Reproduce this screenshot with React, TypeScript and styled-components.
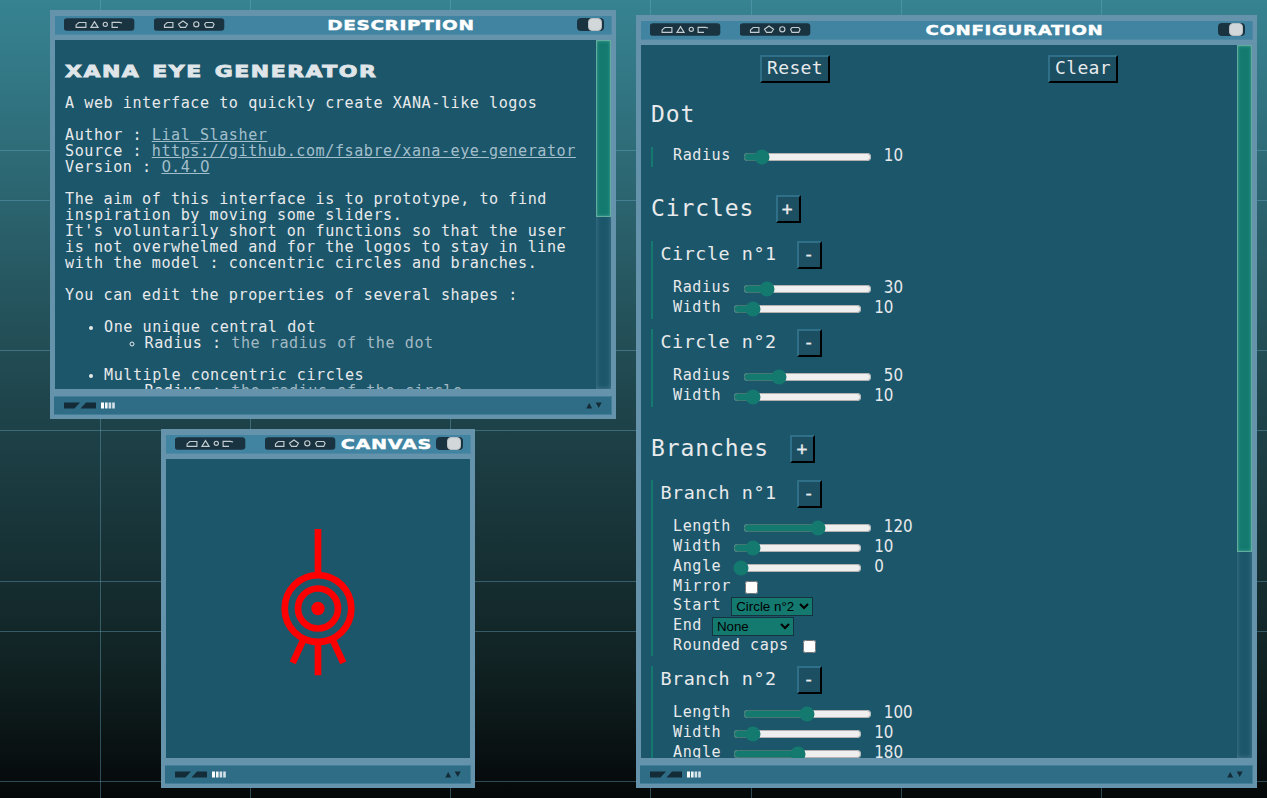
import React from "react";
import styled, { createGlobalStyle } from "styled-components";

const MONO = '"DejaVu Sans Mono", "Liberation Mono", monospace';

const GlobalStyle = createGlobalStyle`
  *, *::before { box-sizing: border-box; }
  html, body { margin: 0; height: 100%; overflow: hidden; }
  #root { height: 100%; }
`;

const Desktop = styled.div`
  position: relative;
  width: 1267px;
  height: 798px;
  overflow: hidden;
  color: #e8eaec;
  font-family: ${MONO};
  background: linear-gradient(#378392 0, #1f454c 400px, #112324 660px, #050809 798px);
`;

const Grid = styled.svg`
  display: block;
  width: 100%;
  height: 100%;
`;

const Frame = styled.section<{ $x: number; $y: number; $w: number; $h: number }>`
  position: absolute;
  left: ${(p) => p.$x}px;
  top: ${(p) => p.$y}px;
  width: ${(p) => p.$w}px;
  height: ${(p) => p.$h}px;
  display: flex;
  flex-direction: column;
  padding: 6px 5px 4px;
  background: #6493ab;
`;

const TitleBar = styled.header`
  display: flex;
  flex: none;
  height: 19px;
  margin: 0 -1px 5px 0;
  padding: 2px 7px 0 9px;
  background: #4084a2;
  border-right: 1px solid #5089a6;
  border-bottom: 1px solid #5089a6;
`;

const Pill = styled.svg`
  flex: none;
  display: block;
  width: 71px;
  height: 13px;
  margin-right: 18.5px;
  & + & { margin-right: 0; }
`;

const TitleSlot = styled.div`
  flex: 1;
  min-width: 0;
  display: flex;
  justify-content: center;
`;

const WideText = styled.span<{ $size: number; $scale: number }>`
  display: block;
  white-space: pre;
  font: bold ${(p) => p.$size}px/14px "DejaVu Sans", sans-serif;
  transform: scaleX(${(p) => p.$scale});
  -webkit-text-stroke: 0.4px currentColor;
`;

const Caption = styled(WideText)`
  color: #fff;
  letter-spacing: 0.5px;
  margin-right: -0.5px;
`;

const Toggle = styled.div`
  flex: none;
  width: 27px;
  height: 13px;
  padding: 0 2px 0 11px;
  border-radius: 4px;
  background: #1a3340;
  &::before {
    content: "";
    display: block;
    height: 13px;
    border-radius: 4px;
    background: #d2d7da;
    border: 1px solid #b8c0c5;
  }
`;

const Body = styled.div`
  flex: 1;
  min-height: 0;
  display: flex;
  background: #1c566a;
`;

const Content = styled.div`
  flex: 1;
  min-width: 0;
  overflow: hidden;
  padding: 10px;
`;

const ScrollTrack = styled.div`
  flex: none;
  width: 15px;
  box-shadow: inset 0 0 5px #4b7c94;
`;

const ScrollThumb = styled.div<{ $h: number }>`
  height: ${(p) => p.$h}px;
  background: #147a70;
  border: 1px solid #63ad9f;
  box-shadow: inset 0 0 3px #4da597;
`;

const StatusBar = styled.footer`
  flex: none;
  display: flex;
  justify-content: space-between;
  height: 19px;
  margin: 7px -1px 0;
  padding: 4.5px 9px 0 10px;
  background: #2f6d87;
  border-top: 1px solid #417f9a;
  border-bottom: 1px solid #417f9a;
  border-right: 1px solid #417f9a;
  svg { display: block; }
`;

function GlyphPill({ second }: { second?: boolean }) {
  return (
    <Pill viewBox="0 0 71 13">
      <rect x="-0.3" y="0.2" width="70.6" height="12.5" rx="3.2" fill="#1a3340" />
      <g fill="none" stroke="#c3cdd1" strokeWidth="1.15" transform="translate(-0.5 0)">
        {second ? (
          <>
            <path d="M11 9.4V6.9L13.7 4.5H19.4V9.4Z" />
            <path d="M29.5 3L34 6.2L32 9.4H27L25 6.2Z" />
            <circle cx="42.8" cy="6.3" r="2.6" />
            <path d="M52.5 4.5H59.2L60.6 6.3L59.2 9.4H52.5L51.1 6.3Z" />
          </>
        ) : (
          <>
            <path d="M12.6 9.4V6.9L15.3 4.5H22.4V9.4Z" />
            <path d="M31 3.6L34.6 9.4H27.4Z" />
            <circle cx="41.8" cy="6.3" r="2.1" />
            <path d="M54.5 9.4H48.6V4.4H56L58.6 5" />
          </>
        )}
      </g>
    </Pill>
  );
}

interface WindowProps {
  title: string;
  scale: number;
  x: number;
  y: number;
  w: number;
  h: number;
  children: React.ReactNode;
}

function Window({ title, scale, x, y, w, h, children }: WindowProps) {
  return (
    <Frame $x={x} $y={y} $w={w} $h={h}>
      <TitleBar>
        <GlyphPill />
        <GlyphPill second />
        <TitleSlot>
          <Caption $size={14} $scale={scale}>{title}</Caption>
        </TitleSlot>
        <Toggle />
      </TitleBar>
      <Body>{children}</Body>
      <StatusBar>
        <svg width="52" height="8" viewBox="0 0 52 8">
          <path d="M0 0.5H16L10.5 6.5H0ZM22 0.5H32V6.5H16.5Z" fill="#142c38" />
          <path d="M37 0.5h3v6h-3z" fill="#fff" />
          <path d="M41 0.5h2.6v6h-2.6z" fill="#f0f5f7" />
          <path d="M44.6 0.5h2.6v6h-2.6z" fill="#d3e0e7" />
          <path d="M48.2 0.5h2.6v6h-2.6z" fill="#d3e0e7" />
        </svg>
        <svg width="16" height="8" viewBox="0 0 16 8">
          <path d="M3.2 1L6.2 6.5H0.2ZM9.7 0.5H15.7L12.7 6Z" fill="#142c38" />
        </svg>
      </StatusBar>
    </Frame>
  );
}

/* ---------- Description ---------- */

const Prose = styled.div`
  font-size: 15.1px;
  line-height: 16px;
  letter-spacing: 0.0365em;
  white-space: nowrap;
  p { margin: 0 0 16px; }
  ul { margin: 0 0 16px; padding-left: 39px; }
  ul ul { margin: 0; padding-left: 40.5px; }
  li > span { color: #a3b9c3; }
  li::marker { font-size: 12.5px; }
`;

const Heading = styled.h1`
  margin: 0;
  height: 45px;
  padding-top: 14.5px;
  color: #dfe5e8;
  ${WideText} {
    width: max-content;
    letter-spacing: 1.05px;
    word-spacing: 2px;
    transform-origin: left center;
    -webkit-text-stroke-width: 0.8px;
  }
`;

const Link = styled.a`
  color: #a3bfcc;
  text-decoration: underline;
`;

const PlainZero = styled.span`
  font-family: "DejaVu Sans", sans-serif;
  letter-spacing: 0;
`;

function Description() {
  return (
    <>
      <Content>
        <Prose>
          <Heading>
            <WideText $size={15} $scale={1.46}>XANA EYE GENERATOR</WideText>
          </Heading>
          <p>A web interface to quickly create XANA-like logos</p>
          <p>
            Author : <Link href="#">Lial_Slasher</Link>
            <br />
            Source : <Link href="#">https://github.com/fsabre/xana-eye-generator</Link>
            <br />
            Version : <Link href="#"><PlainZero>0</PlainZero>.4.<PlainZero>0</PlainZero></Link>
          </p>
          <p>
            The aim of this interface is to prototype, to find
            <br />
            inspiration by moving some sliders.
            <br />
            It's voluntarily short on functions so that the user
            <br />
            is not overwhelmed and for the logos to stay in line
            <br />
            with the model : concentric circles and branches.
          </p>
          <p>You can edit the properties of several shapes :</p>
          <ul>
            <li>
              One unique central dot
              <ul>
                <li>Radius : <span>the radius of the dot</span></li>
              </ul>
            </li>
          </ul>
          <ul>
            <li>
              Multiple concentric circles
              <ul>
                <li>Radius : <span>the radius of the circle</span></li>
              </ul>
            </li>
          </ul>
        </Prose>
      </Content>
      <ScrollTrack>
        <ScrollThumb $h={177} />
      </ScrollTrack>
    </>
  );
}

/* ---------- Configuration ---------- */

const Actions = styled.div`
  display: grid;
  grid-template-columns: 1fr 1fr;
  justify-items: center;
`;

const Button = styled.button<{ $w: number }>`
  width: ${(p) => p.$w}px;
  height: 28px;
  padding: 0 0 2px;
  border: 2px solid;
  border-color: #2f6f88 #000 #000 #2f6f88;
  background: #1b4f61;
  color: #e8eaec;
  font: 18.05px/22px ${MONO};
  letter-spacing: 0.02em;
`;

const SignButton = styled(Button)<{ $lift?: number }>`
  padding: 0 2px ${(p) => p.$lift ?? 1}px 0;
  font-size: 18px;
  letter-spacing: 0;
  -webkit-text-stroke: 0.3px currentColor;
`;

const SectionHead = styled.h2<{ $top: number; $bottom: number }>`
  display: flex;
  align-items: center;
  height: 28px;
  margin: ${(p) => p.$top}px 0 ${(p) => p.$bottom}px;
  font: 23px/28px ${MONO};
  letter-spacing: 0.9px;
  white-space: pre;
  & > span { position: relative; top: -1px; margin-right: 21.5px; }
`;

const Group = styled.div`
  border-left: 2px solid #147a70;
  padding-left: 20px;
  & + & { margin-top: 10px; }
`;

const GroupHead = styled.h3`
  display: flex;
  gap: 20.5px;
  margin: 0 0 10px -12.5px;
  height: 28px;
  font: 18.4px/25px ${MONO};
  letter-spacing: 0.55px;
`;

const Row = styled.label<{ $h?: number }>`
  display: flex;
  height: ${(p) => p.$h ?? 20}px;
  font-size: 15.1px;
  line-height: 16px;
  letter-spacing: 0.0365em;
  white-space: pre;
`;

const Value = styled.span`
  margin-left: 10px;
  font: 16.8px/16px "DejaVu Sans Condensed", "DejaVu Sans", sans-serif;
  font-stretch: condensed;
  letter-spacing: 0;
`;

const Range = styled.input.attrs({ type: "range" })`
  width: 129px;
  height: 16px;
  margin: 2px 2px 2px 12px;
  accent-color: #147a70;
`;

const Check = styled.input.attrs({ type: "checkbox" })`
  width: 13px;
  height: 13px;
  margin: 3px 3px 3px 14px;
`;

const Select = styled.select`
  width: 82px;
  height: 19px;
  margin-left: 10px;
  border: 1px solid #16323f;
  border-radius: 0;
  background-color: #147a70;
  color: #000;
  font: 13.333px "Liberation Sans", Arial, sans-serif;
`;

function Slider({ name, value, at }: { name: string; value: number; at: number }) {
  return (
    <Row>
      {name}
      <Range min={0} max={1000} defaultValue={at} />
      <Value>{value}</Value>
    </Row>
  );
}

function Minus({ title }: { title: string }) {
  return (
    <GroupHead>
      <span>{title}</span>
      <SignButton $w={25} $lift={4}>-</SignButton>
    </GroupHead>
  );
}

function BranchOptions() {
  return (
    <>
      <Row $h={19}>Mirror<Check /></Row>
      <Row>
        Start
        <Select><option>Circle n°2</option></Select>
      </Row>
      <Row>
        End
        <Select><option>None</option></Select>
      </Row>
      <Row $h={19}>Rounded caps<Check /></Row>
    </>
  );
}

function Configuration() {
  return (
    <>
      <Content>
        <Actions>
          <Button $w={70}>Reset</Button>
          <Button $w={70}>Clear</Button>
        </Actions>
        <SectionHead $top={18} $bottom={18}><span>Dot</span></SectionHead>
        <Group>
          <Slider name="Radius" value={10} at={100} />
        </Group>
        <SectionHead $top={28} $bottom={18}>
          <span>Circles</span>
          <SignButton $w={25}>+</SignButton>
        </SectionHead>
        <Group>
          <Minus title="Circle n°1" />
          <Slider name="Radius" value={30} at={143} />
          <Slider name="Width" value={10} at={100} />
        </Group>
        <Group>
          <Minus title="Circle n°2" />
          <Slider name="Radius" value={50} at={250} />
          <Slider name="Width" value={10} at={100} />
        </Group>
        <SectionHead $top={28} $bottom={17}>
          <span>Branches</span>
          <SignButton $w={25}>+</SignButton>
        </SectionHead>
        <Group>
          <Minus title="Branch n°1" />
          <Slider name="Length" value={120} at={593} />
          <Slider name="Width" value={10} at={100} />
          <Slider name="Angle" value={0} at={0} />
          <BranchOptions />
        </Group>
        <Group>
          <Minus title="Branch n°2" />
          <Slider name="Length" value={100} at={496} />
          <Slider name="Width" value={10} at={100} />
          <Slider name="Angle" value={180} at={500} />
          <BranchOptions />
        </Group>
      </Content>
      <ScrollTrack>
        <ScrollThumb $h={507} />
      </ScrollTrack>
    </>
  );
}

/* ---------- Canvas ---------- */

function Logo() {
  return (
    <svg width="304" height="299" viewBox="-152 -149.5 304 299">
      <circle r="6.67" fill="red" />
      <g fill="none" stroke="red" strokeWidth="6.67">
        <circle r="20" />
        <circle r="33.33" />
        <path d="M0 -33.3V-79.5M0 33.3V66.67M14.1 30.2L25.3 54.4M-14.1 30.2L-25.3 54.4" />
      </g>
    </svg>
  );
}

const columns = [100, 250, 450, 650, 751, 901, 1101];
const rows = [150, 200, 350, 430, 581, 631, 781];

export default function App() {
  return (
    <Desktop>
      <GlobalStyle />
      <Grid>
        <g fill="#6cabc6" fillOpacity="0.4">
          {columns.map((x) => <rect key={x} x={x} y={0} width={1} height={798} />)}
          {rows.map((y) => <rect key={y} x={0} y={y} width={1267} height={1} />)}
        </g>
      </Grid>
      <Window title="DESCRIPTION" scale={1.32} x={50} y={10} w={566} h={409}>
        <Description />
      </Window>
      <Window title="CANVAS" scale={1.37} x={161} y={429} w={314} h={359}>
        <Logo />
      </Window>
      <Window title="CONFIGURATION" scale={1.3} x={636} y={15} w={621} h={773}>
        <Configuration />
      </Window>
    </Desktop>
  );
}
